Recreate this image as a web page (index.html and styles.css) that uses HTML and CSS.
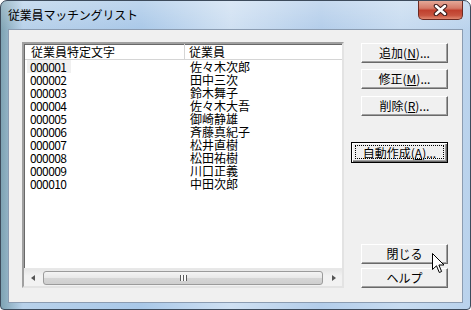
FILE: index.html
```html
<!DOCTYPE html>
<html lang="ja">
<head>
    <meta charset="UTF-8">
    <title>従業員マッチングリスト</title>
    <link rel="stylesheet" href="styles.css">
</head>
<body>
    <div class="window">
        <div class="titlebar">
            <span class="title">従業員マッチングリスト</span>
            <div class="close">
                <svg width="17" height="12" viewBox="0 0 17 12">
                    <path d="M4 2 L13 10 M13 2 L4 10" stroke="#3a1a1a" stroke-width="4.5" stroke-linecap="round"/>
                    <path d="M4 2 L13 10 M13 2 L4 10" stroke="#fff" stroke-width="2.5" stroke-linecap="round"/>
                </svg>
            </div>
        </div>
        <div class="client">
            <div class="listview">
                <div class="lv-header">
                    <div class="hcell col1">従業員特定文字</div>
                    <div class="hcell col2">従業員</div>
                </div>
                <div class="lv-body">
                    <div class="row"><span class="col1"><span class="sel">000001</span></span><span class="col2">佐々木次郎</span></div>
                    <div class="row"><span class="col1">000002</span><span class="col2">田中三次</span></div>
                    <div class="row"><span class="col1">000003</span><span class="col2">鈴木舞子</span></div>
                    <div class="row"><span class="col1">000004</span><span class="col2">佐々木大吾</span></div>
                    <div class="row"><span class="col1">000005</span><span class="col2">御崎静雄</span></div>
                    <div class="row"><span class="col1">000006</span><span class="col2">斉藤真紀子</span></div>
                    <div class="row"><span class="col1">000007</span><span class="col2">松井直樹</span></div>
                    <div class="row"><span class="col1">000008</span><span class="col2">松田祐樹</span></div>
                    <div class="row"><span class="col1">000009</span><span class="col2">川口正義</span></div>
                    <div class="row"><span class="col1">000010</span><span class="col2">中田次郎</span></div>
                </div>
                <div class="hscroll">
                    <div class="sb-btn"><span class="arrow-left"></span></div>
                    <div class="sb-track">
                        <div class="sb-thumb"><span class="grip"></span></div>
                    </div>
                    <div class="sb-btn"><span class="arrow-right"></span></div>
                </div>
            </div>
            <div class="buttons">
                <button class="btn">追加(<u>N</u>)...</button>
                <button class="btn">修正(<u>M</u>)...</button>
                <button class="btn">削除(<u>R</u>)...</button>
                <button class="btn default wide"><span class="focus">自動作成(<u>A</u>)...</span></button>
                <button class="btn bottom">閉じる</button>
                <button class="btn">ヘルプ</button>
            </div>
        </div>
        <svg class="cursor" width="13" height="21" viewBox="0 0 13 21">
            <path d="M0.5 0.5 L0.5 16.5 L4.5 12.8 L7.3 19.5 L9.6 18.5 L6.9 12 L12 12 Z" fill="#fff" stroke="#000" stroke-width="1" stroke-linejoin="round"/>
        </svg>
    </div>
</body>
</html>
```

FILE: styles.css
```css
body {
    margin: 0;
    background: #ffffff;
    font-family: "Noto Sans CJK JP", "Noto Sans", sans-serif;
    font-size: 12px;
    color: #000;
}
.window {
    position: relative;
    width: 471px;
    height: 310px;
    box-sizing: border-box;
    border: 1px solid #3d4b5c;
    border-radius: 7px 7px 4px 4px;
    padding: 0 7px 6px 7px;
    background:
        linear-gradient(to bottom, rgba(255,255,255,0.25), rgba(255,255,255,0) 30px),
        linear-gradient(to right, #7ea3b3 0, #b8d1ea 22px, #a9c8e8 140px, #cfe0f2 230px, #b3cdea 320px, #c7dbf0 400px, #b9d2ec 471px);
}
.titlebar {
    height: 28px;
    display: flex;
    justify-content: space-between;
    align-items: flex-start;
}
.title {
    font-size: 12px;
    line-height: 28px;
    color: #000;
    letter-spacing: -0.2px;
}
.close {
    width: 45px;
    height: 19px;
    box-sizing: border-box;
    border: 1px solid #6b2a22;
    border-top: none;
    border-radius: 0 0 5px 5px;
    background: linear-gradient(to bottom, #e4a897 0, #d47a68 40%, #c0402e 52%, #c85440 80%, #e08870 100%);
    display: flex;
    justify-content: center;
    align-items: center;
}
.client {
    width: 455px;
    height: 274px;
    box-sizing: border-box;
    border: 1px solid #8b9cb1;
    background: #f0f0f0;
    padding: 12px 14px 14px 13px;
    display: flex;
    gap: 17px;
}
.listview {
    width: 322px;
    height: 246px;
    box-sizing: border-box;
    border: 2px solid;
    border-color: #a0a0a0 #e3e3e3 #e3e3e3 #a0a0a0;
    box-shadow: inset 1px 1px 0 #696969;
    background: #fff;
    display: flex;
    flex-direction: column;
}
.lv-header {
    height: 15px;
    border-bottom: 1px solid #d5d5d5;
    display: flex;
    line-height: 15px;
    margin-left: 1px;
}
.hcell {
    box-sizing: border-box;
}
.hcell.col1 {
    width: 160px;
    padding-left: 6px;
    border-right: 1px solid #d5d5d5;
}
.hcell.col2 {
    padding-left: 4px;
}
.lv-body {
    flex: 1;
    margin-left: 1px;
}
.row {
    height: 13px;
    line-height: 13px;
    display: flex;
}
.row .col1 {
    width: 160px;
    box-sizing: border-box;
    padding-left: 5px;
    letter-spacing: -0.6px;
}
.row .col2 {
    padding-left: 5px;
}
.sel {
    display: inline-block;
    background: #f0f0f0;
    margin-left: -3px;
    padding: 0 5px 0 3px;
}
.hscroll {
    height: 17px;
    display: flex;
    background: linear-gradient(to bottom, #e6e6e6, #f2f2f2 40%, #f2f2f2);
    border-top: 1px solid #e8e8e8;
}
.sb-btn {
    width: 17px;
    display: flex;
    justify-content: center;
    align-items: center;
}
.arrow-left {
    width: 0;
    height: 0;
    border-top: 3px solid transparent;
    border-bottom: 3px solid transparent;
    border-right: 4px solid #555;
}
.arrow-right {
    width: 0;
    height: 0;
    border-top: 3px solid transparent;
    border-bottom: 3px solid transparent;
    border-left: 4px solid #555;
}
.sb-track {
    flex: 1;
    padding: 0 2px;
    display: flex;
    align-items: center;
}
.sb-thumb {
    flex: 1;
    height: 14px;
    box-sizing: border-box;
    border: 1px solid #9b9b9b;
    border-radius: 3px;
    background: linear-gradient(to bottom, #f4f4f4, #e8e8e8 50%, #d6d6d6 51%, #cfcfcf);
    display: flex;
    justify-content: center;
    align-items: center;
}
.grip {
    width: 7px;
    height: 6px;
    background: repeating-linear-gradient(to right, #5a5a5a 0, #5a5a5a 1px, #fafafa 1px, #fafafa 3px);
}
.buttons {
    width: 87px;
    display: flex;
    flex-direction: column;
    align-items: flex-end;
}
.btn {
    width: 87px;
    height: 20px;
    box-sizing: border-box;
    padding: 0;
    font-family: inherit;
    font-size: 12px;
    line-height: 16px;
    color: #000;
    background: #f0f0f0;
    border: 1px solid;
    border-color: #fff #696969 #696969 #fff;
    box-shadow: inset -1px -1px 0 #a0a0a0;
    margin-bottom: 6px;
}
.btn:first-child {
    margin-top: 1px;
}
.btn:nth-child(2) {
    margin-bottom: 7px;
}
.btn:nth-child(3) {
    margin-bottom: 26px;
}
.btn.wide {
    width: 97px;
}
.btn.default {
    height: 21px;
    border: 1px solid #000;
    box-shadow: inset 1px 1px 0 #fff, inset -1px -1px 0 #696969, inset -2px -2px 0 #a0a0a0;
    padding: 2px 3px 3px 3px;
}
.focus {
    display: block;
    height: 100%;
    box-sizing: border-box;
    border: 1px dotted #000;
    line-height: 13px;
}
.btn.bottom {
    margin-top: auto;
    margin-bottom: 4px;
}
.btn:last-child {
    margin-bottom: 0;
}
.cursor {
    position: absolute;
    left: 431px;
    top: 252px;
}
```
